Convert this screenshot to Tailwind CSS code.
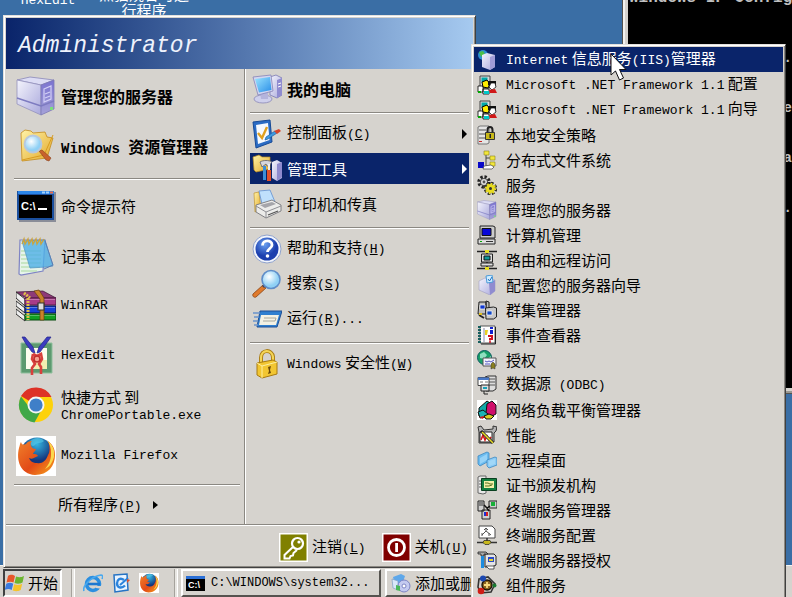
<!DOCTYPE html>
<html lang="zh-CN">
<head>
<meta charset="utf-8">
<title>Windows Server 2003</title>
<script src="https://cdn.jsdelivr.net/npm/@tailwindcss/browser@4"></script>
</head>
<body class="relative h-screen overflow-hidden bg-[#3a6ea5] font-['Noto_Sans_CJK_SC',sans-serif] text-[15px] leading-4 text-black [&_kbd]:font-['Liberation_Mono',monospace] [&_kbd]:text-[13px]">

<!-- shared drawings -->
<svg class="absolute size-0" aria-hidden="true">
  <defs>
    <linearGradient id="gFront" x1="0" y1="0" x2="1" y2="1"><stop offset="0" stop-color="#f4f4fc"/><stop offset="1" stop-color="#a9a8dc"/></linearGradient>
    <linearGradient id="gSide" x1="0" y1="0" x2="0" y2="1"><stop offset="0" stop-color="#7a72d0"/><stop offset="1" stop-color="#a5a2d8"/></linearGradient>
    <linearGradient id="gFolder" x1="0" y1="0" x2="1" y2="1"><stop offset="0" stop-color="#fff3a8"/><stop offset="1" stop-color="#e3a92a"/></linearGradient>
    <radialGradient id="gLens" cx=".4" cy=".35"><stop offset="0" stop-color="#ffffff"/><stop offset="1" stop-color="#8fd0f5"/></radialGradient>
    <radialGradient id="gBlue" cx=".4" cy=".3"><stop offset="0" stop-color="#6aa0f0"/><stop offset="1" stop-color="#1c3fae"/></radialGradient>
    <linearGradient id="gScreen" x1="0" y1="0" x2="1" y2="1"><stop offset="0" stop-color="#9be4ff"/><stop offset="1" stop-color="#2a8fe8"/></linearGradient>
    <radialGradient id="gGlobe" cx=".5" cy=".2"><stop offset="0" stop-color="#35b5e0"/><stop offset="1" stop-color="#14377e"/></radialGradient>
    <linearGradient id="gFox" x1="0" y1="0" x2="1" y2="1"><stop offset="0" stop-color="#f0802a"/><stop offset=".55" stop-color="#e24a17"/><stop offset="1" stop-color="#f9a61c"/></linearGradient>
  </defs>
  <symbol id="server" viewBox="0 0 40 40">
    <path d="M1 4 14 1 38 4 25 9Z" fill="#dcdcf4" stroke="#8a88b8" stroke-width=".8"/>
    <path d="M1 4 25 9V39L1 28Z" fill="url(#gFront)" stroke="#9492bc" stroke-width=".8"/>
    <path d="M25 9 38 4V33L25 39Z" fill="url(#gSide)" stroke="#7c79b4" stroke-width=".8"/>
    <path d="M1 22 25 30 38 25" fill="none" stroke="#7d7bc0" stroke-width="1.4"/>
    <path d="M28 13l7-3v13l-7 3zM29 18l5-2M29 22l5-2" fill="none" stroke="#d3d0f6" stroke-width="1.2"/>
    <path d="M34 31h3v3h-3z" fill="#7be07a"/>
  </symbol>
  <symbol id="firefox" viewBox="0 0 40 40">
    <path d="M0 0h40v40H0z" fill="#fff"/>
    <circle cx="21" cy="18" r="16.500" fill="url(#gGlobe)"/>
    <path d="M14 5c5-4 11-4 14 0-3 3-7 1-9 4-2 2-5 1-5-4z" fill="#58cdea" opacity=".6"/>
    <path d="M3 12c-3 12 1 26 16 27 13 0 20-9 20-20 0-7-3-11-7-14 2 6 2 11 0 14-2 6-6 9-11 8-4 0-7-2-8-5 4 2 6-1 9-2-1-2-3-2-5-2 0-2 3-3 3-5-3 0-4-1-5-3-1-3 0-4 1-5-3 0-5 1-6 3C7 9 6 9 5 6 4 7 4 9 3 12Z" fill="url(#gFox)"/>
    <path d="M31 4c6 5 8 10 7 17-2 7-5 10-9 12 4-5 6-9 6-15 0-6-1-10-4-14z" fill="#fbd84c"/>
  </symbol>
  <symbol id="netfx" viewBox="0 0 20 20">
    <path d="M3 1h10v12H3z" fill="#d8d8d8" stroke="#444"/><path d="M4.500 2.500h6v5h-6z" fill="#00a8a8"/>
    <path d="M1 11h5v6H1zM6 14h6v5H6z" fill="#fff" stroke="#000" stroke-width=".8"/>
    <path d="M5 7l5-2 3 4-2 4-5-1z" fill="#ffee00" stroke="#000"/><path d="M11 6h8v6h-5l-3-2z" fill="#111"/>
    <path d="M14 8h4l1 4-4 3-3-3z" fill="#fff" stroke="#000" stroke-width=".7"/><path d="M12 15l6-1 2 4h-7z" fill="#d01818"/>
    <path d="M7 16h5v3H7z" fill="#00c8c8"/><path d="M1 16h3v2H1z" fill="#0a0"/>
  </symbol>
</svg>

<!-- desktop icon captions -->
<div class="absolute -top-[14px] left-5 flex items-start gap-5 text-center text-white">
  <span class="w-14 pt-1"><kbd>HexEdit</kbd></span>
  <span class="w-24">熊猫烧香可运<br>行程序</span>
</div>

<!-- console window -->
<section class="absolute -top-5 right-0 left-[622px] h-[414px] overflow-hidden border-b border-l border-[#55534f] bg-[#d6d3ce] pb-[5px] pl-[5px] shadow-[inset_2px_0_0_#f4f3f0,inset_0_-2px_0_#9a9892]" aria-label="cmd">
  <div class="relative h-full bg-black font-['Liberation_Mono',monospace] font-bold text-[#c0c0c0]">
    <p class="pt-2 pl-px text-base leading-5 whitespace-nowrap">Windows IP Config</p>
    <div class="absolute top-[68px] right-0 text-right text-sm [&>p]:h-[50px]"><p>.</p><p>e</p><p>a</p><p>.</p></div>
  </div>
</section>

<!-- taskbar -->
<footer class="absolute inset-x-0 bottom-0 flex h-8 items-stretch border-t border-[#f4f3f0] bg-[#d6d3ce] pt-[3px] pl-[3px]">
  <button class="flex w-[59px] items-center gap-[3px] border-2 border-t-[#404040] border-r-white border-b-white border-l-[#404040]">
    <svg class="size-5" viewBox="0 0 20 20"><path d="M3 3c3-2 5-1 7 0L8.500 9.500c-2-1-4-1-7 0z" fill="#e8562a"/><path d="M11 3.500c3 1 5 1 8-.5l-1.500 6.500c-3 1.500-5 1.500-8 .5z" fill="#6cb52d"/><path d="M1.200 10.700c3-1.500 5-1 7 0L6.700 17c-2-1-4-1.500-7 0z" fill="#3b7be0"/><path d="M9.200 11.200c3 1 5 1 8-.5L15.700 17c-3 1.500-5 1.500-8 .5z" fill="#f5c32c"/></svg>
    开始
  </button>
  <i class="mr-1 ml-[9px] w-1 border-r border-l border-r-white border-l-[#a5a29c] bg-[#e8e6e2]"></i>
  <nav class="flex w-[95px] items-center gap-2 pl-1">
    <a href="#" aria-label="Internet Explorer"><svg class="size-5" viewBox="0 0 20 20"><circle cx="10" cy="11" r="6.500" fill="none" stroke="#2b8fe0" stroke-width="3.600"/><path d="M5 11h12" stroke="#1e78d0" stroke-width="2.600"/><path d="M13 13h7v3l-7-1z" fill="#d6d3ce"/><path d="M1 18c-2-5 8-15 17-16 2 0 2 2 1 4" fill="none" stroke="#4aa9ee" stroke-width="1.600"/></svg></a>
    <a href="#" aria-label="Outlook Express"><svg class="size-5" viewBox="0 0 20 20"><path d="M3 2l13-1 1 16-13 2z" fill="#e9f4ff" stroke="#2673c4" stroke-width="1.500"/><path d="M13 7c-4-3-7 0-7 3.500s4 6 8 2" fill="none" stroke="#2b83dc" stroke-width="2.400"/><path d="M9 12l8-7" stroke="#2b83dc" stroke-width="2"/><path d="M16 6l3 1-3 3z" fill="#e0502a"/></svg></a>
    <a href="#" aria-label="Mozilla Firefox"><svg class="size-5"><use href="#firefox"/></svg></a>
  </nav>
  <i class="mr-[3px] w-1 border-r border-l border-r-white border-l-[#a5a29c] bg-[#e8e6e2]"></i>
  <button class="flex w-[200px] items-center gap-[6px] border-2 border-t-white border-r-[#55534f] border-b-[#55534f] border-l-white pl-[3px] whitespace-nowrap">
    <svg class="h-[15px] w-[19px] shrink-0" viewBox="0 0 19 15"><path d="M0 0h19v15H0z" fill="#000"/><path d="M0 0h19v3H0z" fill="#2a6fd6"/><text x="2" y="12" font-family="Liberation Sans" font-weight="700" font-size="9" fill="#fff">C:\</text></svg>
    <span class="font-['Liberation_Mono',monospace] text-xs">C:\WINDOWS\system32...</span>
  </button>
  <button class="ml-1 flex w-[200px] items-center gap-1 border-2 border-t-white border-r-[#55534f] border-b-[#55534f] border-l-white pl-1 whitespace-nowrap">
    <svg class="size-5 shrink-0" viewBox="0 0 20 20"><path d="M2 4l8-3 4 2-3 9-7 1z" fill="#5fa8ea"/><path d="M1 6l6 2v9l-5-2z" fill="#d9e8f8" stroke="#7f9fc4" stroke-width=".7"/><circle cx="13" cy="13" r="6" fill="#c4caf0" stroke="#7d84c4"/><circle cx="13" cy="13" r="2" fill="#fff" stroke="#7d84c4"/><path d="M5 12l4 1v5l-4-1z" fill="#4ab858"/></svg>
    添加或删
  </button>
</footer>

<!-- start menu -->
<div class="absolute bottom-[29px] left-[3px] w-[473px] border border-t-[#e4e2de] border-r-[#404040] border-b-[#404040] border-l-[#e4e2de] bg-[#d6d3ce] p-[2px] shadow-[inset_1px_1px_0_#fff,inset_-1px_-1px_0_#8b8882]">
  <header class="flex h-[51px] items-center bg-linear-to-r from-[#0a246a] to-[#a6caf0] pt-1 pl-3">
    <h1 class="font-['Liberation_Mono',monospace] text-[23px] leading-7 text-[#eef2fc] italic">Administrator</h1>
  </header>

  <div class="flex">
    <nav class="w-[239px] border-r border-[#8b8882] pt-[2px] [&_a]:flex [&_a]:h-[50px] [&_a]:items-center [&_a]:gap-[5px] [&_a]:pl-[10px] [&_hr]:mr-1 [&_hr]:ml-2 [&_hr]:h-[2px] [&_hr]:border-t [&_hr]:border-[#8b8882] [&_hr]:bg-white [&_svg]:size-10 [&_svg]:shrink-0">
      <a href="#" class="text-base font-bold"><svg><use href="#server"/></svg>管理您的服务器</a>
      <a href="#" class="text-base font-bold">
        <svg viewBox="0 0 40 40"><path d="M5 7l4-3 6 1 2 2 12-1 2 5 6 1-6 20-25 3z" fill="url(#gFolder)" stroke="#c48a1c" stroke-width=".8"/><path d="M37 9L28 29 6 34" fill="none" stroke="#d99c20"/><path d="M23 25l3-1 9 8-2 3-3-1z" fill="#c8622c" stroke="#87401c" stroke-width=".6"/><circle cx="17" cy="18" r="8.500" fill="url(#gLens)" stroke="#b8c8dc" stroke-width="1.800"/></svg>
        <span><kbd class="text-sm!">Windows </kbd>资源管理器</span></a>
      <hr class="mt-[7px] mb-px">
      <a href="#"><svg viewBox="0 0 40 40"><path d="M3 6h37v30H3z" fill="#6a6f82" opacity=".7"/><path d="M1 5h37v29H1z" fill="#1b4f9e"/><path d="M2 5h36v3H2z" fill="#2c86e8"/><path d="M3 9h33v23H3z" fill="#000"/><path d="M26 5.500h3v2h-3zm4 0h3v2h-3z" fill="#9fd0ff"/><path d="M34 5.500h3v2h-3z" fill="#e86a4a"/><text x="5" y="24" font-family="Liberation Sans" font-weight="700" font-size="11" fill="#fff">C:\</text><path d="M22 22h9v2h-9z" fill="#fff"/></svg>命令提示符</a>
      <a href="#"><svg viewBox="0 0 40 40"><path d="M4 4h25l-2 31-22 4-2-1z" fill="#e6f4ea" stroke="#7f84c4" stroke-width="1.200"/><path d="M5 15h20M5 19h20M5 23h20M5 27h20M5 31h19M5 35h16" stroke="#a9d89e"/><path d="M6 5l23-1 8 26-7 1-16 1z" fill="#4fb0e8" opacity=".8" stroke="#3d86c4" stroke-width=".8"/><path d="M29 5l8 24-9 4" fill="none" stroke="#5a7fb4"/><path d="M6 8l2-5 1 5 3-5 1 5 3-5 1 5 3-5 1 5 3-5 1 5 3-5" fill="none" stroke="#c9a440" stroke-width="1.400"/></svg>记事本</a>
      <a href="#"><svg viewBox="0 0 40 40"><path d="M0 6l27-1 13 7H10z" fill="#8e3a78" stroke="#3a1430" stroke-width=".7"/><path d="M0 6l9 7v7L0 12zM0 15l9 7v5L0 20zM0 23l9 7v5L0 28z" fill="#eee" stroke="#333"/><path d="M9 12h31v7H9z" fill="#a83c88" stroke="#531c44"/><path d="M9 20h31v7H9z" fill="#1740d8" stroke="#04104a"/><path d="M9 28h31v6H9z" fill="#12a024" stroke="#054a0c"/><path d="M9 13.500h30M9 21.500h30M9 29.500h30" stroke="#fff" opacity=".3"/><path d="M12 12v22M8 7l6 5" stroke="#e0c04a" stroke-width="3" stroke-dasharray="2 1"/><path d="M18 5l5-1 5 8v22h-4V13z" fill="#c8832a" stroke="#6a3c08" stroke-width=".7"/><path d="M22 17h6v7h-6z" fill="#ddd" stroke="#333" stroke-width="1.200"/></svg><kbd>WinRAR</kbd></a>
      <a href="#"><svg viewBox="0 0 40 40"><path d="M5 7h31v30H5z" fill="#5d9a70" stroke="#8fc09c"/><path d="M10 12h21v21H10z" fill="#fdfdee"/><path d="M20 24h11v9H18z" fill="#f2eeb0"/><path d="M6 1l4 7 6 8 3 1-2-6L9 1zM35 1l-5 7-6 8-3 1 2-6 8-10z" fill="#3c3cc0" stroke="#24248a" stroke-width=".7"/><path d="M17 18l4 2 4-2 1 5-3 5 2 3v7M17 18l-1 5 3 5-3 4v7" fill="none" stroke="#d8403c" stroke-width="2.600"/><circle cx="21" cy="23" r="3" fill="#f4a090" stroke="#c02c2c" stroke-width="1.600"/></svg><kbd>HexEdit</kbd></a>
      <a href="#">
        <svg viewBox="0 0 40 40"><circle cx="20" cy="19" r="17" fill="#fdd20a"/><path d="M20 19L5 10A17.500 17.500 0 0 1 35.500 11H20z" fill="#dd3126"/><path d="M5 10.500A17.500 17.500 0 0 0 18.500 36.400L26 23l-12-1z" fill="#40a848"/><circle cx="20" cy="19" r="8.500" fill="#f4f6f4"/><circle cx="20" cy="19" r="6.600" fill="#3f7fc8"/></svg>
        <span>快捷方式 到<br><kbd>ChromePortable.exe</kbd></span></a>
      <a href="#"><svg><use href="#firefox"/></svg><kbd>Mozilla Firefox</kbd></a>
      <hr class="mt-[3px]">
      <button class="flex h-[38px] items-center gap-3 pl-[52px]"><span>所有程序<kbd>(<u>P</u>)</kbd></span><i class="border-y-4 border-l-[5px] border-y-transparent border-l-black"></i></button>
    </nav>

    <nav class="flex flex-1 flex-col border-l border-white px-1 pt-[2px] [&_a]:my-[2px] [&_a]:flex [&_a]:h-[31px] [&_a]:items-center [&_a]:gap-[5px] [&_a]:pl-[2px] [&_a_i]:mr-[2px] [&_a_i]:ml-auto [&_a_i]:border-y-[5px] [&_a_i]:border-l-[5px] [&_a_i]:border-y-transparent [&_hr]:mt-[6px] [&_hr]:mb-[2px] [&_hr]:h-[2px] [&_hr]:border-t [&_hr]:border-[#8b8882] [&_hr]:bg-white [&_svg]:size-[30px] [&_svg]:shrink-0">
      <a href="#" class="text-base font-bold"><svg viewBox="0 0 30 30"><path d="M18 3l6-2 6 3v17l-5 3-7-3z" fill="url(#gFront)" stroke="#7a78b4" stroke-width=".8"/><path d="M25 6l5-2v17l-5 3z" fill="#8f8bd0"/><path d="M26 10l3-1M26 13l3-1" stroke="#fff"/><ellipse cx="11" cy="25" rx="9" ry="4" fill="#cfd0ec" stroke="#8a88b8" stroke-width=".8"/><path d="M8 18l8 1v6H9z" fill="#b4b4dc"/><path d="M1 3l18-2 2 16-15 4z" fill="#d4d6f0" stroke="#8583b8" stroke-width=".8"/><path d="M3 5l15-2 1.500 13L7 18.500z" fill="url(#gScreen)"/></svg>我的电脑</a>
      <hr>
      <a href="#"><svg viewBox="0 0 30 30"><path d="M1 3l17-2 2 22L4 29z" fill="#2b6cc4" stroke="#174a96"/><path d="M4 6l12-2 1.500 17L6 25z" fill="#f6faff"/><path d="M6 14l4 5 5-11" fill="none" stroke="#e0a020" stroke-width="2.400"/><path d="M14 18l9-6 2 2-9 6-3 1z" fill="#3f9ae0" stroke="#1d5fa8" stroke-width=".7"/><path d="M22 12l5-2 2 2-4 3z" fill="#d8452a"/></svg><span>控制面板<kbd>(<u>C</u>)</kbd></span><i class="border-l-black"></i></a>
      <a href="#" class="bg-[#0a246a] text-white"><svg viewBox="0 0 30 30"><path d="M1 3l6-2 3 2h8v12l-14 3-2-2z" fill="url(#gFolder)" stroke="#b88a20" stroke-width=".7"/><path d="M20 8l5-2 5 3v15l-5 3-5-3z" fill="url(#gFront)"/><path d="M25 10l5-2v15l-5 4z" fill="#8e8ace"/><path d="M8 8c3-2 9-2 12 0l-3 4h-2l-1-2-4 3z" fill="#d6d6dc" stroke="#5c5c68" stroke-width=".8"/><path d="M11 12h3v14h-3z" fill="#3c8ed8"/><path d="M16 10h2v7h-2z" fill="#eee"/><path d="M15 16h4v11h-4z" fill="#e2502c"/></svg>管理工具<i class="border-l-white"></i></a>
      <a href="#"><svg viewBox="0 0 30 30"><path d="M2 4l5-1 2 18-6 2z" fill="url(#gFolder)" stroke="#b88a20" stroke-width=".6"/><path d="M7 2l11-1 5 12-13 2z" fill="#bfe0fc" stroke="#5f8fd0" stroke-width=".8"/><path d="M4 16l16-5 9 5v6L14 29 4 23z" fill="#ececea" stroke="#76767a" stroke-width=".9"/><path d="M4 17l10 6 15-6M14 23v6" fill="none" stroke="#8f8f94"/><path d="M8 16l12-3 4 2-11 4z" fill="#a5a5aa"/><path d="M16 26l10-4" stroke="#555" stroke-width="1.300"/></svg>打印机和传真</a>
      <hr>
      <a href="#"><svg viewBox="0 0 30 30"><circle cx="15" cy="15" r="14" fill="#f2f5fc" stroke="#8fa2cc"/><circle cx="15" cy="15" r="11.500" fill="url(#gBlue)"/><path d="M10.500 11.500c0-6 9.500-6 9.500-.5 0 3.500-4.500 3.500-4.500 7" fill="none" stroke="#fff" stroke-width="2.800"/><circle cx="15.500" cy="22" r="1.800" fill="#fff"/></svg><span>帮助和支持<kbd>(<u>H</u>)</kbd></span></a>
      <a href="#"><svg viewBox="0 0 30 30"><path d="M11 16l3 3L4 28c-2 1-4-1-3-3z" fill="#e07a2c" stroke="#8a4414" stroke-width=".8"/><path d="M11 18l2-2" stroke="#445" stroke-width="3"/><circle cx="19" cy="10.500" r="9" fill="url(#gLens)" stroke="#5f8dc8" stroke-width="1.600"/></svg><span>搜索<kbd>(<u>S</u>)</kbd></span></a>
      <a href="#"><svg viewBox="0 0 30 30"><path d="M8 7h22l-5 16H5z" fill="#2f7fd0" stroke="#1e4e94"/><path d="M9 11h18l-3 10H7z" fill="#f3f1e4"/><path d="M12 14h12l-1 3H11" fill="none" stroke="#a8a79c"/><path d="M1 9h7M2 13h5M1 17h5M2 21h4" stroke="#6a94cc" stroke-width="1.400"/></svg><span>运行<kbd>(<u>R</u>)...</kbd></span></a>
      <hr>
      <a href="#"><svg viewBox="0 0 30 30"><path d="M9 15V9c0-9 11-9 12-1v6" fill="none" stroke="#a87a10" stroke-width="4"/><path d="M9 15V9c0-9 11-9 12-1v6" fill="none" stroke="#f5d657" stroke-width="2.200"/><path d="M5 14l16-3 4 2v12l-15 4-5-3z" fill="#f2c632" stroke="#a87a10"/><path d="M5 14l5 3v12M10 17l15-4" fill="none" stroke="#fff0a0"/><path d="M16 18l3-1-1 4 1 3-3 1 1-3z" fill="#6a4808"/></svg><span><kbd>Windows</kbd> 安全性<kbd>(<u>W</u>)</kbd></span></a>
    </nav>
  </div>

  <div class="flex h-[41px] items-center justify-end gap-4 border-t border-[#8b8882] pt-1 pr-[5px] shadow-[inset_0_1px_0_#fff] [&_button]:flex [&_button]:items-center [&_button]:gap-1 [&_svg]:size-[29px]">
    <button><svg viewBox="0 0 29 29"><path d="M0 0h29v29H0z" fill="#fff"/><path d="M1.500 1.500h26v26h-26z" fill="#808000"/><path d="M15 13L5.500 22v3.500h5l1-2.500 2.500-.5.500-2.500 3.500-3" fill="none" stroke="#fff" stroke-width="2"/><circle cx="18.500" cy="10.500" r="5.500" fill="#808000" stroke="#fff" stroke-width="2.200"/><circle cx="20" cy="9" r="1.600" fill="#fff"/></svg><span>注销<kbd>(<u>L</u>)</kbd></span></button>
    <button><svg viewBox="0 0 29 29"><path d="M0 0h29v29H0z" fill="#fff"/><path d="M1.500 1.500h26v26h-26z" fill="#800000"/><circle cx="14.500" cy="14.500" r="8" fill="none" stroke="#fff" stroke-width="2.800"/><path d="M13.200 10h2.800v9h-2.800z" fill="#fff"/></svg><span>关机<kbd>(<u>U</u>)</kbd></span></button>
  </div>
</div>

<!-- administrative tools submenu -->
<nav class="absolute top-[44px] left-[471px] w-[315px] border border-t-[#e4e2de] border-r-[#404040] border-b-[#404040] border-l-[#e4e2de] bg-[#d6d3ce] p-[2px] shadow-[inset_1px_1px_0_#fff,inset_-1px_-1px_0_#8b8882] [&_a]:flex [&_a]:h-[25px] [&_a]:items-center [&_a]:gap-[9px] [&_a]:pl-[3px] [&_a]:whitespace-nowrap [&_svg]:size-5 [&_svg]:shrink-0">
  <a href="#" class="bg-[#0a246a] text-white"><svg viewBox="0 0 20 20"><circle cx="6" cy="5" r="5" fill="#2c8fd0"/><path d="M2 2l4-1 2 3-4 3z" fill="#4cc048"/><path d="M5 5l5-2 8 2v12l-5 3-8-3z" fill="url(#gFront)"/><path d="M13 7l5-2v12l-5 3z" fill="#a09cd8"/></svg><span><kbd>Internet</kbd> 信息服务<kbd>(IIS)</kbd>管理器</span></a>
  <a href="#"><svg><use href="#netfx"/></svg><span><kbd>Microsoft .NET Framework 1.1</kbd> 配置</span></a>
  <a href="#"><svg><use href="#netfx"/></svg><span><kbd>Microsoft .NET Framework 1.1</kbd> 向导</span></a>
  <a href="#"><svg viewBox="0 0 20 20"><path d="M1 2l2-1h9v17l-2 1H1z" fill="#e4e4e4" stroke="#777"/><path d="M2 5h7M2 9h7M2 13h7" stroke="#555"/><path d="M2 16h3v1H2z" fill="#c22"/><path d="M10.500 9V5c0-4 5-4 5 0v4" fill="none" stroke="#222" stroke-width="2"/><path d="M8.500 7.500h9v7h-9z" fill="#c8b818" stroke="#333"/><path d="M12.500 9h1.500v4h-1.500z" fill="#222"/></svg>本地安全策略</a>
  <a href="#"><svg viewBox="0 0 20 20"><path d="M9 5v11h4M9 8h5" fill="none" stroke="#444"/><path d="M7 1h5v4H7zM13 6h5v4h-5zM13 12h5v4h-5z" fill="#f2e63a" stroke="#8a8420" stroke-width=".6"/><path d="M1 12h6v6H1z" fill="#0808c8"/><path d="M7 16l7-1 3 2-2 2H6z" fill="#fff" stroke="#444" stroke-width=".7"/></svg>分布式文件系统</a>
  <a href="#"><svg viewBox="0 0 20 20"><circle cx="7" cy="7" r="5" fill="none" stroke="#222" stroke-width="3.400" stroke-dasharray="2.200 1.700"/><circle cx="7" cy="7" r="3.600" fill="#ddd" stroke="#333" stroke-width=".8"/><circle cx="7" cy="7" r="1.400" fill="#555"/><circle cx="13.500" cy="13.500" r="4.500" fill="none" stroke="#222" stroke-width="4.400" stroke-dasharray="2.200 1.300"/><circle cx="13.500" cy="13.500" r="4.500" fill="#e8dc20" stroke="#e8dc20" stroke-width="2.600" stroke-dasharray="1.400 2.100"/><circle cx="13.500" cy="13.500" r="1.500" fill="#333"/></svg>服务</a>
  <a href="#"><svg><use href="#server"/></svg>管理您的服务器</a>
  <a href="#"><svg viewBox="0 0 20 20"><path d="M3 1h13l2 1v11H3z" fill="#ccc" stroke="#222"/><path d="M5 3.500h9v7H5z" fill="#0808d8" stroke="#111"/><path d="M1 14h17v5H1z" fill="#ddd" stroke="#222"/><path d="M3 16.500h2" stroke="#0a0"/><path d="M9 16.500h7" stroke="#333"/></svg>计算机管理</a>
  <a href="#"><svg viewBox="0 0 20 20"><path d="M0 1.500h20M0 18.500h20M10 2v16" stroke="#222" stroke-width="1.500"/><path d="M8 0h4v3H8zM8 17h4v3H8z" fill="#e8e020"/><path d="M4.500 4h11v8h-11z" fill="#ddd" stroke="#222"/><path d="M7 6h6v4H7z" fill="#109898" stroke="#111"/><path d="M4 13h12v3H4z" fill="#ddd" stroke="#222"/></svg>路由和远程访问</a>
  <a href="#"><svg viewBox="0 0 20 20"><path d="M2 6l6-3 10 2v11l-5 4-11-5z" fill="url(#gFront)" stroke="#9492bc" stroke-width=".5"/><path d="M12 8l6-3v11l-5 4z" fill="#908cd0"/><path d="M9 1l6-1 1 7-6 1z" fill="#d0ecff" stroke="#4a9ad8"/><path d="M11 4l1.500 2L15 2" fill="none" stroke="#1c70c0"/></svg>配置您的服务器向导</a>
  <a href="#"><svg viewBox="0 0 20 20"><path d="M2 2h7v12H1zM9 1l3 1v11l-3 1z" fill="#bdbdbd" stroke="#222"/><path d="M3 5h5v4H3z" fill="#1038d0" stroke="#fff" stroke-width=".7"/><path d="M8.500 8l8-1 3 1v9l-3 2H9z" fill="#c8c8c8" stroke="#222"/><path d="M10 11h5v4h-5z" fill="#1048c8" stroke="#fff" stroke-width=".7"/><path d="M2 15l5 3" stroke="#222" stroke-width="2"/><path d="M2 13h3v2H2z" fill="#e0c020"/></svg>群集管理器</a>
  <a href="#"><svg viewBox="0 0 20 20"><path d="M3 1h15v17H3z" fill="#fff" stroke="#555"/><path d="M18.500 2v17H4" fill="none" stroke="#222"/><path d="M2.500 1v18" stroke="#175f5f" stroke-width="3" stroke-dasharray="2 1"/><path d="M7 3v14" stroke="#88a"/><path d="M13 2h3v2h-3zM13 5h3v4h-3z" fill="#1020d0"/><path d="M8 5h3l-1 5H8z" fill="#e8d020"/><path d="M11 11h4v3h-2v1.500" fill="none" stroke="#d01020" stroke-width="2"/><circle cx="13" cy="17" r="1" fill="#d01020"/></svg>事件查看器</a>
  <a href="#"><svg viewBox="0 0 20 20"><circle cx="7.500" cy="7.500" r="7" fill="#18a068" stroke="#0c5a60"/><path d="M3 4l4-2 3 3-3 4-4-1zM10 9l4-3v4z" fill="#8fe0c0"/><path d="M6 8h13v8H6z" fill="#f2f2fa" stroke="#555"/><path d="M8 11l2 1 2-1 2 1 3-2M8 14h5" fill="none" stroke="#5458c0"/><path d="M14 14l2-2 2 2v5l-2-1-2 1z" fill="#8a8020" stroke="#333" stroke-width=".5"/></svg>授权</a>
  <a href="#"><svg viewBox="0 0 20 20"><path d="M8 2l3-1h8v13l-3 2H9z" fill="#ddd" stroke="#333"/><path d="M12 4h6M12 7h6M12 10h6" stroke="#555"/><path d="M1 2.500h11v8H1z" fill="#fff" stroke="#444"/><path d="M1 2.500h11v2.500H1z" fill="#4878c8"/><path d="M3 7h3M8 7h3" stroke="#777"/><path d="M4 10h8v6H4z" fill="#ddd" stroke="#222"/><path d="M6 12h4v2H6z" fill="#18a0b8"/><path d="M7 16v3h4" fill="none" stroke="#222"/></svg><span>数据源<kbd> (ODBC)</kbd></span></a>
  <a href="#"><svg viewBox="0 0 20 20"><path d="M0 0h20v20H0z" fill="#fff"/><path d="M2 8l8-7 3 2-3 12-8 1z" fill="#10a8a8" stroke="#111"/><path d="M10 4l5-3 4 4v9l-4 2-6-3z" fill="#d0106c" stroke="#111"/><path d="M1 12l5-2 5 4-2 3-6 1z" fill="#1cb4b4" stroke="#111"/><path d="M7 16l5-2 5 2-3 3H9z" fill="#d8cc20" stroke="#111"/><path d="M2 17l5-1-1 3z" fill="#d01818"/></svg>网络负载平衡管理器</a>
  <a href="#"><svg viewBox="0 0 20 20"><path d="M1 2l3-1 3 4 9-1V1l4 1-1 4-2 2v9l-3 1H2V7z" fill="#b4b4b4" stroke="#333"/><path d="M3 7h12v10H3z" fill="#fff" stroke="#222"/><path d="M4 15l2-5 2 5 2-4 2 4 2-3" fill="none" stroke="#d41818" stroke-width="1.600"/><path d="M4 6l12 12" stroke="#222" stroke-width="3"/><path d="M5 7l11 11" stroke="#e8dc28" stroke-width="1.600"/></svg>性能</a>
  <a href="#"><svg viewBox="0 0 20 20"><path d="M1 6l9-4 2 1v8l-9 5-2-2z" fill="#6cbcf0" stroke="#3c88c0" stroke-width=".8"/><path d="M10 10l8-3 2 1v7l-8 3-2-2z" fill="#8cccf6" stroke="#3c88c0" stroke-width=".8"/><path d="M3 8l7-4v6l-7 4zM12 11l6-2v5l-6 2z" fill="#a8dcfa" opacity=".7"/></svg>远程桌面</a>
  <a href="#"><svg viewBox="0 0 20 20"><path d="M1 2l2-1h6v17l-3 1-5-1z" fill="#e8e8e8" stroke="#666"/><path d="M2 6h3M2 9h3M2 12h3" stroke="#666"/><path d="M4.500 3.500h15v12h-15z" fill="#158040" stroke="#0a4020"/><path d="M7 6h10v7H7z" fill="#f4f0a8"/><path d="M8 8h3l2 1h3M8 11h4l3-1" fill="none" stroke="#58701c"/></svg>证书颁发机构</a>
  <a href="#"><svg viewBox="0 0 20 20"><path d="M1 1h6v10H1zM12 1h8v7h-8zM5 10h8v9H5z" fill="#d0d0d0" stroke="#222"/><path d="M2 3h4M2 5h4" stroke="#333"/><path d="M14 2h4v4h-4z" fill="#18b038"/><path d="M7 5l3 3 3-2M10 8l2 3" fill="none" stroke="#111" stroke-width="1.500"/><path d="M7 12h2v4H7z" fill="#2030d0"/><path d="M9 12h2v4H9z" fill="#d82020"/></svg>终端服务管理器</a>
  <a href="#"><svg viewBox="0 0 20 20"><path d="M2 1h13l3 3v9H2z" fill="#fff" stroke="#444"/><path d="M7 5l2-2 2 2M9 4v2l-4 4M9 6l5 4M5 8v3M12 8v3" fill="none" stroke="#555"/><path d="M10 13v4M0 17.500h20" stroke="#333" stroke-width="1.500"/><path d="M7 15.500h6l1 2-2 2H8l-2-2z" fill="#c8b81c" stroke="#222" stroke-width=".7"/></svg>终端服务配置</a>
  <a href="#"><svg viewBox="0 0 20 20"><path d="M8 4h9l2 2v9l-4 2H8z" fill="#e4e4e4" stroke="#222"/><path d="M11 7h6v5h-6z" fill="#2848c8"/><path d="M12 9h4v2h-4z" fill="#e8d828"/><path d="M1 2h8l2 2H7v2H4V4H1z" fill="#aaa" stroke="#222" stroke-width=".8"/><path d="M4 6h3v12H4z" fill="#1c8ce0"/><path d="M9 16h8v3h-5z" fill="#fff" stroke="#333" stroke-width=".8"/></svg>终端服务器授权</a>
  <a href="#"><svg viewBox="0 0 20 20"><path d="M2 4l9-2 7 7-4 8-10 1-3-6z" fill="none" stroke="#333" stroke-width="1.600"/><circle cx="10" cy="10" r="5" fill="#8a6420" stroke="#1c1408" stroke-width="1.400"/><path d="M10 7v6M7 10h6" stroke="#f8dc80" stroke-width="1.800"/><circle cx="6" cy="3.500" r="3" fill="#1c48b0"/><circle cx="4" cy="16" r="3.300" fill="#d01c14"/><circle cx="17.500" cy="10.500" r="2" fill="#187830"/></svg>组件服务</a>
</nav>

<!-- mouse pointer -->
<svg class="pointer-events-none absolute top-[53px] left-[610px] h-[28px] w-[18px]" viewBox="0 0 18 28" aria-hidden="true"><path d="M1 1v21l4.500-4 4 9 4-2-4-8.500H16z" fill="#fff" stroke="#111"/></svg>
</body>
</html>
